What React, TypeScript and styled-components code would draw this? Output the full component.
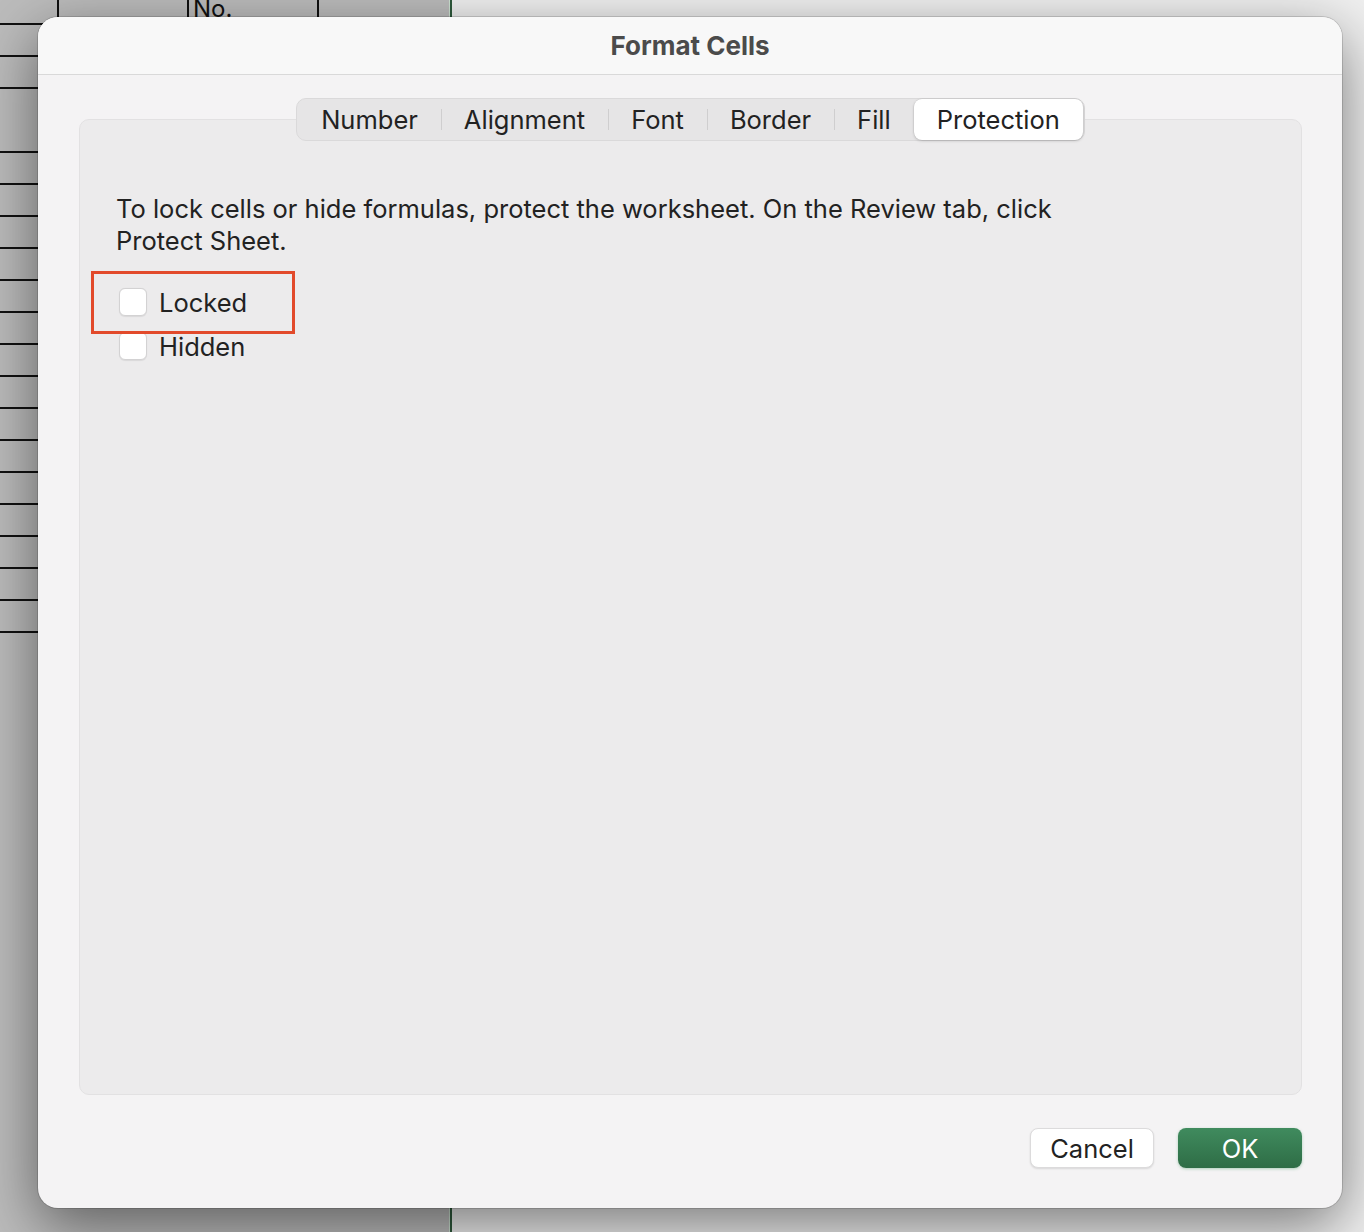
import React from 'react';
import styled, { createGlobalStyle, css } from 'styled-components';

const GlobalStyle = createGlobalStyle`
  html, body {
    margin: 0;
    padding: 0;
  }
  body {
    width: 1364px;
    height: 1232px;
    overflow: hidden;
    font-family: Inter, "Noto Sans", "Liberation Sans", sans-serif;
    color: #222222;
  }
`;

const Page = styled.div`
  position: relative;
  width: 1364px;
  height: 1232px;
  overflow: hidden;
  background: #efefef;
`;

const Sheet = styled.div`
  display: grid;
  grid-template-columns: 59px 130px 130px 130px 3px 1fr;
  grid-auto-rows: 32px;
  grid-template-rows: 25px;
  height: 100%;
`;

const Cell = styled.div<{ $last?: boolean; $tall?: boolean; $blank?: boolean }>`
  background: #bcbcbc;
  border-right: ${(p) => (p.$last || p.$blank ? 'none' : '2px solid #111')};
  border-bottom: ${(p) => (p.$blank ? 'none' : '2px solid #111')};
  box-sizing: border-box;
  grid-row: ${(p) => (p.$tall ? 'span 2' : 'auto')};
  font-size: 24px;
  line-height: 1;
  padding-left: 4px;
  overflow: hidden;
`;

const HeaderText = styled.span`
  display: block;
  margin-top: -3px;
  color: #111;
`;

const GreenLine = styled.div`
  grid-row: 1 / span 60;
  background: #2e5a3c;
  border-left: 1px solid #cfe5d4;
`;

const WhiteArea = styled.div`
  grid-row: 1 / span 60;
  background: #f0f0f0;
`;

const Dialog = styled.div`
  position: absolute;
  left: 38px;
  top: 17px;
  width: 1304px;
  height: 1191px;
  border-radius: 20px;
  background: #f4f3f4;
  box-shadow: 0 18px 60px rgba(0, 0, 0, 0.5), 0 0 0 1px rgba(0, 0, 0, 0.14);
  display: flex;
  flex-direction: column;
  overflow: hidden;
`;

const TitleBar = styled.div`
  height: 57px;
  flex: none;
  display: flex;
  align-items: center;
  justify-content: center;
  background: #f8f8f8;
  border-bottom: 1px solid #d9d9d9;
  font-size: 26px;
  font-weight: 700;
  color: #4b4b4b;
`;

const Body = styled.div`
  flex: 1;
  display: flex;
  flex-direction: column;
  padding: 23px 40px 40px 41px;
  min-height: 0;
`;

const TabBar = styled.div`
  position: relative;
  z-index: 1;
  align-self: center;
  height: 43px;
  box-sizing: border-box;
  display: flex;
  align-items: center;
  padding: 0 1px;
  border-radius: 10px;
  background: #e6e5e6;
  border: 1px solid #dad9da;
`;

const Tab = styled.div<{ $active?: boolean; $divider?: boolean }>`
  position: relative;
  height: 41px;
  display: flex;
  align-items: center;
  padding: 0 23px;
  font-size: 25.5px;
  color: #222;
  border-radius: 8px;
  ${(p) =>
    p.$active &&
    css`
      background: #ffffff;
      box-shadow: 0 1px 3px rgba(0, 0, 0, 0.18), 0 0 0 0.5px rgba(0, 0, 0, 0.08);
    `}
  ${(p) =>
    p.$divider &&
    css`
      &::before {
        content: '';
        position: absolute;
        left: 0;
        top: 10px;
        height: 21px;
        width: 1px;
        background: #cfcecf;
      }
    `}
`;

const Panel = styled.div`
  position: relative;
  flex: 1;
  margin-top: -22px;
  padding: 73px 36px 0;
  background: #ecebec;
  border: 1px solid #e2e1e2;
  border-radius: 10px;
`;

const Message = styled.p`
  margin: 0;
  max-width: 1000px;
  font-size: 25.5px;
  line-height: 32px;
  color: #222;
`;

const OptionList = styled.div`
  display: flex;
  flex-direction: column;
  gap: 16px;
  margin-top: 31px;
`;

const Option = styled.label`
  display: flex;
  align-items: center;
  gap: 12px;
  height: 28px;
  padding-left: 3px;
  font-size: 25.5px;
  color: #222;
`;

const Box = styled.span`
  width: 28px;
  height: 28px;
  box-sizing: border-box;
  border-radius: 6px;
  background: #ffffff;
  border: 1px solid #d3d2d3;
  box-shadow: 0 0.5px 1px rgba(0, 0, 0, 0.08);
`;

const Highlight = styled.div`
  position: absolute;
  left: 11px;
  top: 151px;
  width: 204px;
  height: 63px;
  box-sizing: border-box;
  border: 3px solid #e24a2b;
  pointer-events: none;
`;

const Footer = styled.div`
  display: flex;
  justify-content: flex-end;
  gap: 24px;
  margin-top: 33px;
`;

const Button = styled.button<{ $primary?: boolean }>`
  width: 124px;
  height: 40px;
  border-radius: 8px;
  font-family: inherit;
  font-size: 25.5px;
  cursor: pointer;
  ${(p) =>
    p.$primary
      ? css`
          color: #ffffff;
          border: none;
          background: linear-gradient(#408b5e, #2e6d46);
          box-shadow: 0 1px 3px rgba(40, 140, 80, 0.35);
        `
      : css`
          color: #222;
          background: #ffffff;
          border: 1px solid #dcdbdc;
          box-shadow: 0 1px 2px rgba(0, 0, 0, 0.12);
        `}
`;

const tabs = ['Number', 'Alignment', 'Font', 'Border', 'Fill', 'Protection'];
const activeTab = 5;

const rowCount = 42;

const App = () => {
  const cells: React.ReactNode[] = [];
  for (let r = 0; r < rowCount; r++) {
    if (r === 4) continue;
    for (let c = 0; c < 4; c++) {
      cells.push(
        <Cell
          key={`${r}-${c}`}
          $last={c === 3}
          $tall={r === 3}
          $blank={r >= 20}
          style={{ gridColumn: c + 1 }}
        >
          {r === 0 && c === 2 ? <HeaderText>No.</HeaderText> : null}
        </Cell>
      );
    }
  }

  return (
    <>
      <GlobalStyle />
      <Page>
        <Sheet>
          {cells}
          <GreenLine style={{ gridColumn: 5 }} />
          <WhiteArea style={{ gridColumn: 6 }} />
        </Sheet>
        <Dialog>
          <TitleBar>Format Cells</TitleBar>
          <Body>
            <TabBar>
              {tabs.map((t, i) => (
                <Tab
                  key={t}
                  $active={i === activeTab}
                  $divider={i > 0 && i !== activeTab && i - 1 !== activeTab}
                >
                  {t}
                </Tab>
              ))}
            </TabBar>
            <Panel>
              <Message>
                To lock cells or hide formulas, protect the worksheet. On the Review tab, click
                Protect Sheet.
              </Message>
              <OptionList>
                <Option>
                  <Box />
                  Locked
                </Option>
                <Option>
                  <Box />
                  Hidden
                </Option>
              </OptionList>
              <Highlight />
            </Panel>
            <Footer>
              <Button>Cancel</Button>
              <Button $primary>OK</Button>
            </Footer>
          </Body>
        </Dialog>
      </Page>
    </>
  );
};

export default App;
